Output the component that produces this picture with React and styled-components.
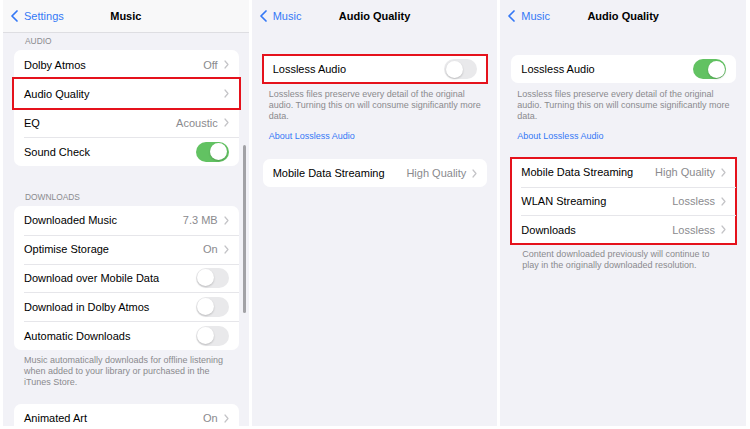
import styled, { createGlobalStyle } from 'styled-components';

const GlobalStyle = createGlobalStyle`
  body {
    margin: 0;
    background: #fff;
    font-family: 'Liberation Sans', Arial, sans-serif;
    -webkit-font-smoothing: antialiased;
  }
`;

const Page = styled.div`
  display: flex;
  gap: 3px;
  height: 429px;
  padding: 0 4px 3px 3px;
  box-sizing: border-box;
  background: #fff;
`;

const Screen = styled.div`
  position: relative;
  flex: 1;
  overflow: hidden;
  background: #f2f2f7;
`;

const NavBar = styled.div`
  display: grid;
  grid-template-columns: 1fr auto 1fr;
  align-items: center;
  height: 32px;
  padding: 0 8px;
  background: ${(p) => (p.$scrolled ? '#f8f8f9' : 'transparent')};
  border-bottom: 1px solid ${(p) => (p.$scrolled ? '#dedee2' : 'transparent')};
`;

const BackButton = styled.div`
  display: flex;
  align-items: center;
  gap: 6px;
  color: #3478f6;
  font-size: 11px;
`;

const Title = styled.div`
  font-size: 11px;
  font-weight: 700;
  color: #000;
`;

const Body = styled.div`
  padding: 0 10px 0 11px;
`;

const SectionLabel = styled.div`
  margin: ${(p) => p.$top}px 0 4px;
  padding-left: 11px;
  font-size: 8.4px;
  line-height: 10px;
  color: #8a8a8e;
  text-transform: uppercase;
`;

const Card = styled.div`
  margin-top: ${(p) => p.$top || 0}px;
  background: #fff;
  border-radius: ${(p) => (p.$marked ? '0' : '7px')};
  outline: ${(p) => (p.$marked ? '2px solid #e5121c' : 'none')};
  outline-offset: -1px;
`;

const Row = styled.div`
  position: relative;
  display: flex;
  align-items: center;
  height: ${(p) => p.$h}px;
  padding: 0 10px;
  font-size: 11px;
  color: #000;
  outline: ${(p) => (p.$marked ? '2px solid #e5121c' : 'none')};

  & + &::before {
    content: '';
    position: absolute;
    top: 0;
    left: 10px;
    right: 0;
    height: 1px;
    background: #e6e6ea;
  }
`;

const Label = styled.span`
  flex: 1;
  white-space: nowrap;
`;

const Value = styled.span`
  display: flex;
  align-items: center;
  gap: 6px;
  color: #8a8a8e;
`;

const Switch = styled.span`
  display: flex;
  justify-content: ${(p) => (p.$on ? 'flex-end' : 'flex-start')};
  align-items: center;
  width: 33px;
  height: 20px;
  padding: 1.5px;
  box-sizing: border-box;
  border-radius: 10px;
  background: ${(p) => (p.$on ? '#62c262' : '#e9e9eb')};
`;

const Knob = styled.span`
  width: 17px;
  height: 17px;
  border-radius: 50%;
  background: #fff;
  box-shadow: 0 1px 2px rgba(0, 0, 0, 0.2);
`;

const Footer = styled.div`
  margin-top: ${(p) => p.$top}px;
  padding-left: ${(p) => p.$inset}px;
  font-size: 9px;
  line-height: 11px;
  color: #8a8a8e;
  white-space: nowrap;
`;

const Link = styled.div`
  margin-top: 9px;
  padding-left: 6px;
  font-size: 9px;
  line-height: 11px;
  color: #3478f6;
`;

const ScrollIndicator = styled.div`
  position: absolute;
  top: 145px;
  right: 3px;
  width: 2.5px;
  height: 168px;
  border-radius: 2px;
  background: #a2a2a6;
`;

const Chevron = () => (
  <svg width="5" height="9" viewBox="0 0 5 9">
    <path d="M1 1l3 3.5L1 8" fill="none" stroke="#c4c4c7" strokeWidth="1.2" strokeLinecap="round" strokeLinejoin="round" />
  </svg>
);

const Back = ({ children }) => (
  <BackButton>
    <svg width="7" height="12" viewBox="0 0 7 12">
      <path d="M6 1L1 6l5 5" fill="none" stroke="#3478f6" strokeWidth="1.7" strokeLinecap="round" strokeLinejoin="round" />
    </svg>
    {children}
  </BackButton>
);

const Toggle = ({ on }) => (
  <Switch $on={on}>
    <Knob />
  </Switch>
);

const Item = ({ label, value, chevron, toggle, h = 29, marked }) => (
  <Row $h={h} $marked={marked}>
    <Label>{label}</Label>
    {chevron && (
      <Value>
        {value}
        <Chevron />
      </Value>
    )}
    {toggle !== undefined && <Toggle on={toggle} />}
  </Row>
);

const MusicScreen = () => (
  <Screen>
    <NavBar $scrolled>
      <Back>Settings</Back>
      <Title>Music</Title>
      <span />
    </NavBar>
    <Body>
      <SectionLabel $top={3}>Audio</SectionLabel>
      <Card>
        <Item label="Dolby Atmos" value="Off" chevron />
        <Item label="Audio Quality" chevron marked />
        <Item label="EQ" value="Acoustic" chevron />
        <Item label="Sound Check" toggle />
      </Card>
      <SectionLabel $top={26}>Downloads</SectionLabel>
      <Card>
        <Item label="Downloaded Music" value="7.3 MB" chevron h={28.8} />
        <Item label="Optimise Storage" value="On" chevron h={28.8} />
        <Item label="Download over Mobile Data" toggle={false} h={28.8} />
        <Item label="Download in Dolby Atmos" toggle={false} h={28.8} />
        <Item label="Automatic Downloads" toggle={false} h={28.8} />
      </Card>
      <Footer $top={5} $inset={10}>
        Music automatically downloads for offline listening
        <br />
        when added to your library or purchased in the
        <br />
        iTunes Store.
      </Footer>
      <Card $top={16}>
        <Item label="Animated Art" value="On" chevron />
      </Card>
    </Body>
    <ScrollIndicator />
  </Screen>
);

const AudioQualityScreen = ({ lossless }) => (
  <Screen>
    <NavBar>
      <Back>Music</Back>
      <Title>Audio Quality</Title>
      <span />
    </NavBar>
    <Body>
      <Card $top={22} $marked={!lossless}>
        <Item label="Lossless Audio" toggle={lossless} h={28} />
      </Card>
      <Footer $top={6} $inset={6}>
        Lossless files preserve every detail of the original
        <br />
        audio. Turning this on will consume significantly more
        <br />
        data.
      </Footer>
      <Link>About Lossless Audio</Link>
      {lossless ? (
        <>
          <Card $top={16} $marked>
            <Item label="Mobile Data Streaming" value="High Quality" chevron h={28.7} />
            <Item label="WLAN Streaming" value="Lossless" chevron h={28.7} />
            <Item label="Downloads" value="Lossless" chevron h={28.7} />
          </Card>
          <Footer $top={5} $inset={11}>
            Content downloaded previously will continue to
            <br />
            play in the originally downloaded resolution.
          </Footer>
        </>
      ) : (
        <Card $top={17}>
          <Item label="Mobile Data Streaming" value="High Quality" chevron h={28} />
        </Card>
      )}
    </Body>
  </Screen>
);

const App = () => (
  <>
    <GlobalStyle />
    <Page>
      <MusicScreen />
      <AudioQualityScreen lossless={false} />
      <AudioQualityScreen lossless />
    </Page>
  </>
);

export default App;
